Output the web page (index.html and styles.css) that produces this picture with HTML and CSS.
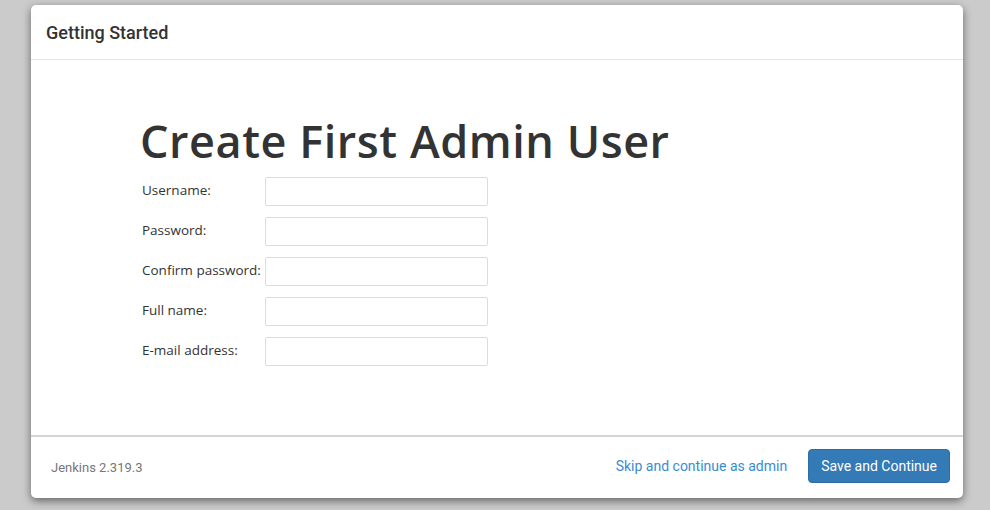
FILE: index.html
```html
<!DOCTYPE html>
<html>
<head>
<meta charset="utf-8">
<link rel="stylesheet" href="styles.css">
</head>
<body>
<div class="modal">
  <div class="modal-header">
    <h4 class="modal-title">Getting Started</h4>
  </div>
  <div class="modal-body">
    <h1 class="title">Create First Admin User</h1>
    <div class="form">
      <div class="row"><label>Username:</label><input type="text" class="field"></div>
      <div class="row"><label>Password:</label><input type="password" class="field"></div>
      <div class="row"><label>Confirm password:</label><input type="password" class="field"></div>
      <div class="row"><label>Full name:</label><input type="text" class="field"></div>
      <div class="row"><label>E-mail address:</label><input type="text" class="field"></div>
    </div>
  </div>
  <div class="modal-footer">
    <div class="version">Jenkins 2.319.3</div>
    <div class="actions">
      <a class="skip">Skip and continue as admin</a>
      <button class="btn">Save and Continue</button>
    </div>
  </div>
</div>
</body>
</html>
```
FILE: styles.css
```css
html, body {
  margin: 0;
  padding: 0;
  background: #cbcbcb;
  height: 510px;
  overflow: hidden;
}
.modal {
  margin: 5px 0 0 31px;
  width: 932px;
  height: 493px;
  background: #fff;
  border-radius: 5px;
  box-shadow: 0 3px 9px rgba(0,0,0,0.5);
  display: flex;
  flex-direction: column;
}
.modal-header {
  height: 54px;
  border-bottom: 1px solid #e5e5e5;
  display: flex;
  align-items: center;
  padding: 0 15px;
  box-sizing: content-box;
}
.modal-title {
  margin: 0;
  font-family: Roboto, sans-serif;
  font-weight: 500;
  font-size: 18px;
  color: #333;
}
.modal-body {
  flex: 1;
  padding: 0 0 0 109px;
}
.title {
  font-family: "Open Sans", sans-serif;
  font-weight: 600;
  font-size: 45px;
  letter-spacing: 0.55px;
  color: #333;
  margin: 50px 0 5px 0;
  line-height: 62px;
}
.form {
  display: flex;
  flex-direction: column;
  gap: 11px;
  padding-left: 2px;
}
.row {
  display: flex;
  align-items: center;
  height: 29px;
}
.row label {
  width: 123px;
  font-family: "Open Sans", sans-serif;
  font-size: 13.5px;
  color: #333;
  white-space: nowrap;
  margin-top: -4px;
}
.field {
  width: 223px;
  height: 29px;
  box-sizing: border-box;
  border: 1px solid #dcdcdc;
  border-radius: 2px;
  margin: 0;
  padding: 0 6px;
  background: #fff;
}
.modal-footer {
  border-top: 2px solid #d4d4d4;
  display: flex;
  align-items: center;
  justify-content: space-between;
  padding: 0 13px 4px 20px;
  box-sizing: border-box;
  height: 63px;
}
.version {
  font-family: Roboto, sans-serif;
  font-size: 13px;
  color: #777;
  padding-top: 4px;
}
.actions {
  display: flex;
  align-items: center;
  gap: 21px;
}
.skip {
  font-family: Roboto, sans-serif;
  font-size: 14px;
  color: #3a8cd1;
  cursor: pointer;
}
.btn {
  font-family: Roboto, sans-serif;
  font-size: 14px;
  color: #fff;
  background: #337ab7;
  border: 1px solid #2e6da4;
  border-radius: 4px;
  height: 34px;
  padding: 0 12px;
}
```
